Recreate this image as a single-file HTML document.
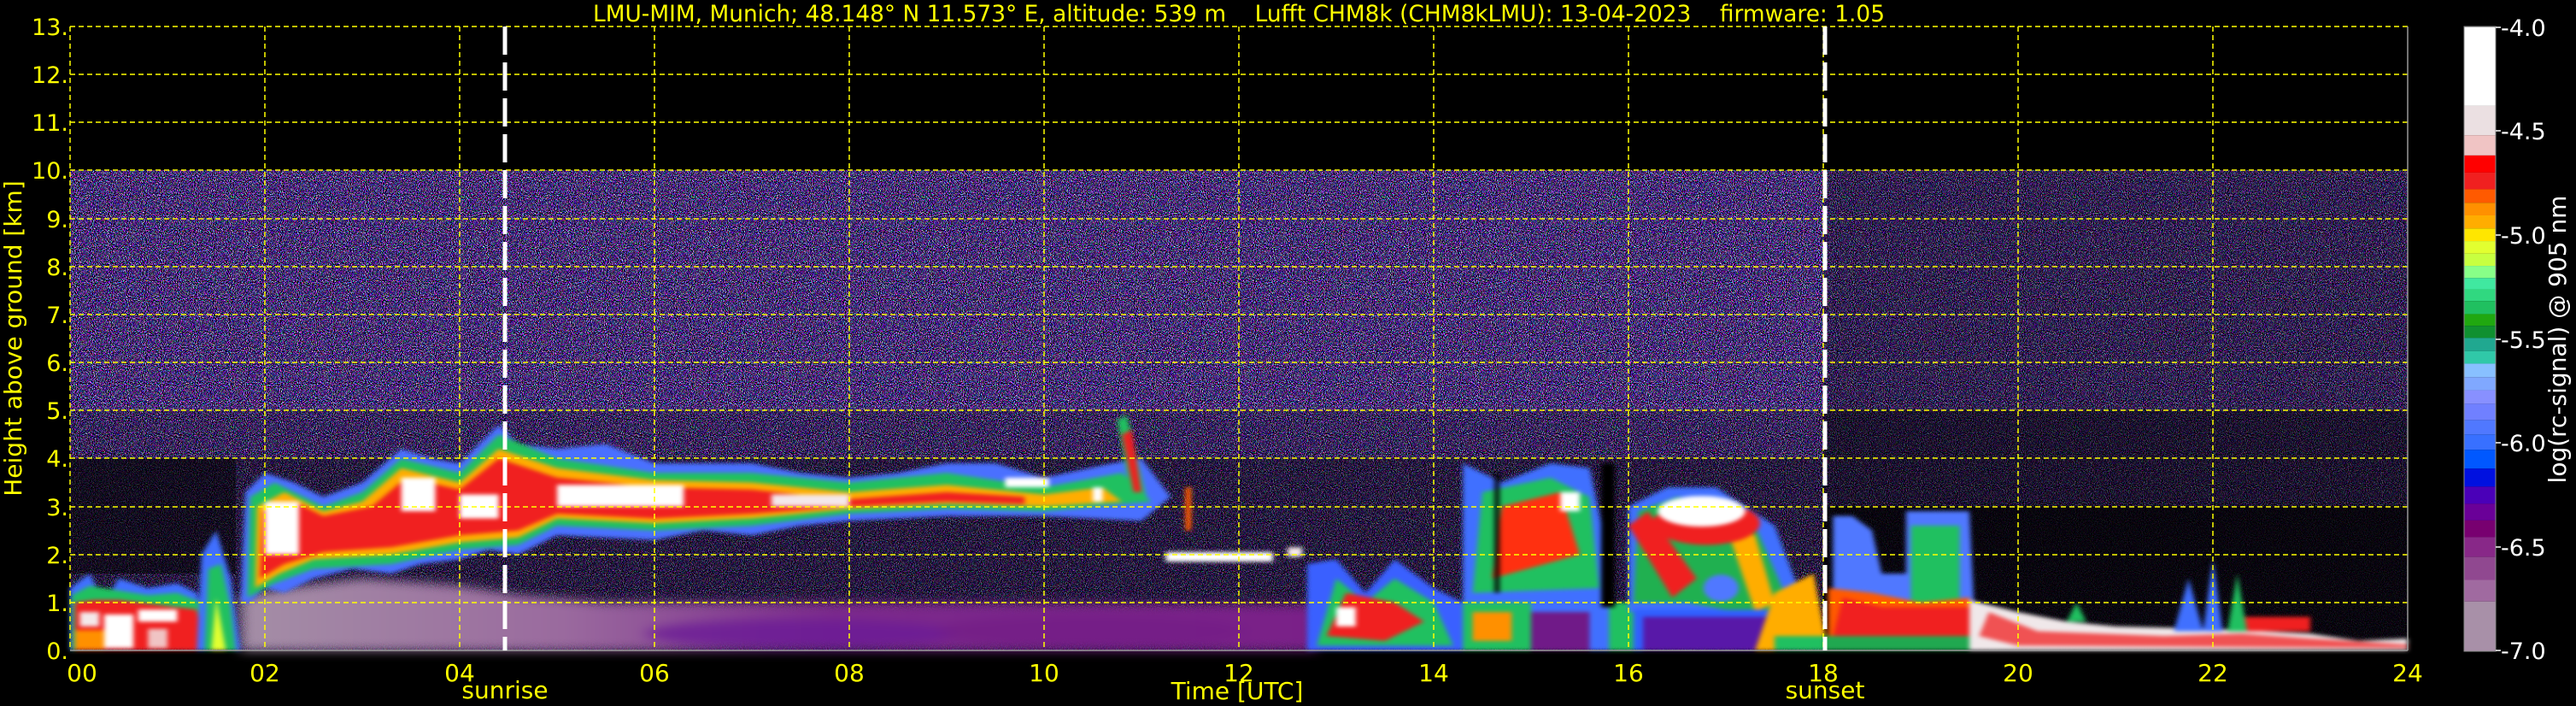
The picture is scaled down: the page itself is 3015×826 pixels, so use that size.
<!DOCTYPE html>
<html><head><meta charset="utf-8"><style>
html,body{margin:0;padding:0;background:#000;}
svg{display:block}
text{font-family:"DejaVu Sans","Liberation Sans",sans-serif;}
</style></head><body>
<svg width="3015" height="826" viewBox="0 0 3015 826" xmlns="http://www.w3.org/2000/svg">
<defs>
<filter id="nz" x="0" y="0" width="1" height="1" filterUnits="objectBoundingBox" color-interpolation-filters="sRGB">
<feTurbulence type="fractalNoise" baseFrequency="0.95" numOctaves="1" seed="7" result="t"/>
<feColorMatrix in="t" type="matrix" values="5 0 0 0 -2.0  0 5 0 0 -2.2  0 0 5 0 -1.4  0 0 0 6 -2.4"/>
</filter>
<filter id="pb" filterUnits="userSpaceOnUse" x="0" y="0" width="3015" height="826" color-interpolation-filters="sRGB">
<feGaussianBlur stdDeviation="3 2.5"/>
</filter>
<filter id="pb2" filterUnits="userSpaceOnUse" x="0" y="0" width="3015" height="826" color-interpolation-filters="sRGB">
<feGaussianBlur stdDeviation="8 6"/>
</filter>
<linearGradient id="bg1" x1="0" x2="1" y1="0" y2="0">
<stop offset="0" stop-color="#a48ea6"/><stop offset="0.3" stop-color="#9a6a9e"/><stop offset="0.55" stop-color="#7c2a8c"/><stop offset="1" stop-color="#7a2088"/>
</linearGradient>
</defs>

<rect x="82" y="199" width="2736" height="562" fill="#000"/>
<rect x="82" y="199" width="2736" height="562" filter="url(#nz)"/>

<g transform="translate(82,761) scale(114,-56.15)">
<rect x="0" y="4" width="18" height="1" fill="#000" opacity="0.2"/>
<rect x="0" y="0" width="18" height="4" fill="#000" opacity="0.45"/>
<rect x="0" y="1.6" width="1.7" height="2.4" fill="#000" opacity="0.5"/>
<rect x="18" y="5" width="6" height="5" fill="#000" opacity="0.3"/>
<rect x="18" y="3" width="6" height="2" fill="#000" opacity="0.6"/>
<rect x="18" y="0" width="6" height="3" fill="#000" opacity="0.88"/>
</g>

<g filter="url(#pb2)">
<g transform="translate(82,761) scale(114,-56.15)">
<polygon points="1.75,0 1.75,1.1 2.2,1.3 3,1.5 4,1.35 4.6,1.15 5.5,1.0 8,1.0 12.8,0.95 12.8,0 " fill="url(#bg1)"/>
<ellipse cx="7.5" cy="0.35" rx="1.6" ry="0.3" fill="#6a1a96" opacity="0.8"/>
<ellipse cx="10.5" cy="0.4" rx="1.6" ry="0.35" fill="#721a86" opacity="0.6"/>
</g>
</g>

<g filter="url(#pb)">
<g transform="translate(82,761) scale(114,-56.15)">
<polygon points="0,0 0,1.3 0.2,1.6 0.35,1.0 0.5,1.5 0.8,1.3 1.1,1.4 1.3,1.2 1.45,0" fill="#4070ff"/>
<polygon points="0.02,0 0.02,1.15 0.2,1.35 0.5,1.25 0.8,1.15 1.1,1.2 1.35,1.0 1.4,0" fill="#20c060"/>
<polygon points="0.05,0 0.05,1.0 0.25,1.05 0.5,1.05 0.9,0.95 1.3,0.85 1.38,0" fill="#f02020"/>
<rect x="0.05" y="0.02" width="0.3" height="0.4" fill="#ff9000"/>
<rect x="0.35" y="0.05" width="0.3" height="0.7" fill="#fff"/>
<rect x="0.1" y="0.5" width="0.2" height="0.3" fill="#f4e8ea"/>
<rect x="0.7" y="0.6" width="0.4" height="0.25" fill="#fff"/>
<rect x="0.8" y="0.05" width="0.2" height="0.4" fill="#f0c4c4"/>
<polygon points="1.3,0 1.35,2.0 1.5,2.5 1.65,1.5 1.75,0" fill="#4070ff"/>
<polygon points="1.38,0 1.42,1.7 1.55,1.8 1.65,0.9 1.7,0" fill="#20c060"/>
<polygon points="1.45,0 1.5,1.1 1.6,0" fill="#e2ff30"/>

<polygon points="1.75,1.0 1.8,3.3 2.0,3.7 2.3,3.5 2.6,3.2 3.0,3.5 3.4,4.2 3.7,4.0 4.0,3.9 4.4,4.7 4.6,4.3 5,4.2 5.5,4.3 6,3.9 6.5,3.9 7,3.9 7.5,3.7 8,3.6 8.5,3.7 9,3.9 9.5,3.9 10,3.6 10.7,3.9 11,4.0 11.3,3.2 11,2.7 10,2.8 9,2.8 8,2.7 7.5,2.6 7,2.4 6.5,2.5 6,2.3 5,2.4 4.6,2.0 4.3,2.1 4,1.9 3.6,1.8 3.3,1.6 2.9,1.7 2.5,1.5 2.2,1.2 2.0,1.3 1.85,1.0" fill="#4a70ff"/>
<polygon points="1.82,1.1 1.85,3.2 2.1,3.5 2.6,3.0 3.0,3.3 3.4,4.0 4.0,3.7 4.4,4.5 5,4.0 6,3.7 7,3.7 8,3.5 9,3.7 10,3.4 10.8,3.7 11.1,3.1 10,2.9 9,2.95 8,2.85 7,2.6 6,2.5 5,2.6 4.6,2.2 4,2.1 3.3,1.8 2.5,1.7 2.1,1.4" fill="#20c060"/>
<polygon points="1.9,1.3 1.92,3.0 2.2,3.3 2.6,2.9 3.0,3.1 3.4,3.8 4.0,3.5 4.4,4.2 5,3.8 6,3.55 7,3.5 8,3.3 9,3.45 10,3.25 10.6,3.4 10.8,3.1 10,3.0 9,3.05 8,2.95 7,2.75 6,2.65 5,2.75 4.6,2.35 4,2.25 3.3,2.0 2.5,1.9 2.15,1.6" fill="#ffad00"/>
<polygon points="1.95,1.5 1.98,2.9 2.3,3.1 2.6,2.8 3.1,3.0 3.45,3.6 4.0,3.35 4.4,4.0 5,3.6 6,3.4 7,3.35 8,3.15 9,3.3 9.8,3.2 9.8,3.05 9,3.1 8,3.0 7,2.85 6,2.75 5,2.85 4.6,2.5 4,2.4 3.3,2.15 2.6,2.05 2.2,1.8" fill="#f02020"/>
<rect x="2.0" y="2.0" width="0.35" height="1.1" fill="#fff"/>
<rect x="3.4" y="2.9" width="0.35" height="0.7" fill="#fff"/>
<rect x="4.0" y="2.75" width="0.4" height="0.5" fill="#fff"/>
<rect x="5.0" y="3.0" width="1.3" height="0.45" fill="#fff"/>
<rect x="7.2" y="3.0" width="0.8" height="0.25" fill="#f4e8ea"/>
<rect x="9.6" y="3.4" width="0.45" height="0.2" fill="#fff"/>
<rect x="10.5" y="3.1" width="0.1" height="0.3" fill="#fff"/>
<polygon points="10.75,4.8 10.85,4.9 11.05,3.2 10.9,3.1" fill="#20c060"/>
<polygon points="10.8,4.5 10.9,4.6 11.0,3.3 10.92,3.3" fill="#f02020"/>
<rect x="11.45" y="2.5" width="0.06" height="0.9" fill="#ff5a00"/>

<rect x="11.25" y="1.85" width="1.1" height="0.2" fill="#fff"/>
<rect x="12.5" y="1.95" width="0.15" height="0.2" fill="#f4e8ea"/>

<polygon points="12.7,0 12.7,1.8 13,1.9 13.3,1.2 13.6,1.9 14.0,1.3 14.3,1.0 14.4,0" fill="#3a60ff"/>
<polygon points="12.8,0.1 13,1.5 13.3,1.0 13.6,1.5 14,1.0 14.2,0.1" fill="#20c060"/>
<polygon points="12.9,0.3 13.1,1.2 13.6,1.0 13.9,0.6 13.5,0.2" fill="#f02020"/>
<rect x="13.0" y="0.5" width="0.2" height="0.4" fill="#fff"/>

<polygon points="14.3,0 14.3,3.9 14.7,3.5 15.2,3.9 15.6,3.8 15.8,1.9 15.9,0" fill="#4070ff"/>
<polygon points="14.4,1.2 14.5,3.3 15.2,3.6 15.6,3.2 15.7,1.3" fill="#20c060"/>
<polygon points="14.6,1.5 14.7,3.0 15.3,3.3 15.5,2.0" fill="#ff3010"/>
<rect x="15.3" y="2.9" width="0.2" height="0.4" fill="#fff"/>
<rect x="14.3" y="0" width="0.7" height="1.0" fill="#20c060"/>
<rect x="14.4" y="0.2" width="0.4" height="0.6" fill="#ff9000"/>
<rect x="15.0" y="0" width="0.6" height="0.8" fill="#701a88"/>
<rect x="15.8" y="0" width="0.3" height="1.0" fill="#20c060"/>
<rect x="15.72" y="0.9" width="0.14" height="3.0" fill="#000"/>
<rect x="14.62" y="1.2" width="0.06" height="2.5" fill="#000" opacity="0.8"/>

<polygon points="16,0.8 16,3.0 16.4,3.4 16.9,3.4 17.2,3.0 17.5,2.6 17.8,1.0 17.6,0.3 17.2,0.8 16.5,0.8" fill="#4070ff"/>
<polygon points="16.05,1 16.1,2.9 16.5,3.2 17,3.1 17.3,2.6 17.6,1.2 17.4,0.7 16.6,1.0" fill="#20b050"/>
<polygon points="16.0,2.6 16.2,2.9 16.7,1.5 16.45,1.1" fill="#f02020"/>
<polygon points="17.0,2.6 17.3,2.4 17.5,1.0 17.3,0.8" fill="#ffad00"/>
<ellipse cx="16.8" cy="2.65" rx="0.55" ry="0.45" fill="#f02020"/>
<ellipse cx="16.75" cy="2.9" rx="0.45" ry="0.32" fill="#fff"/>
<ellipse cx="16.95" cy="1.3" rx="0.18" ry="0.28" fill="#5078ff"/>
<rect x="16.05" y="0" width="1.5" height="0.85" fill="#3060ff"/>
<rect x="16.15" y="0" width="1.35" height="0.7" fill="#5818a8"/>
<polygon points="17.3,0 17.5,1.2 17.9,1.6 18.05,0" fill="#ffad00"/>
<rect x="17.5" y="0" width="0.6" height="0.3" fill="#20c060"/>
<polygon points="18.1,0 18.1,2.8 18.3,2.8 18.5,2.5 18.6,1.6 18.85,1.6 18.85,2.9 19.5,2.9 19.55,0.8 19.6,0" fill="#5078ff"/>
<polygon points="18.9,0.8 18.9,2.6 19.4,2.6 19.4,0.8" fill="#20c060"/>
<polygon points="18.05,0.2 18.05,1.3 18.5,1.2 19,1.0 19.5,1.1 19.65,0.2" fill="#ff5a00"/>
<polygon points="18.1,0.3 18.2,1.1 18.6,0.9 19.6,0.9 19.6,0.3" fill="#f02020"/>
<rect x="18" y="0" width="2" height="0.3" fill="#20a850"/>
<polygon points="19.5,0 19.5,1.05 19.8,0.9 20,0.8 20.5,0.6 21,0.5 22,0.45 22.5,0.4 23,0.35 23.5,0.2 24,0.25 24,0" fill="#f0e8ea"/>
<polygon points="19.6,0.3 19.7,0.8 20.2,0.4 21.5,0.3 22.3,0.35 23,0.25 24,0.12 24,0.05 20,0.1" fill="#f02020" opacity="0.75"/>
<rect x="22.2" y="0.4" width="0.8" height="0.3" fill="#f02020"/>
<polygon points="21.6,0.4 21.75,1.5 21.9,0.4" fill="#4070ff"/>
<polygon points="21.9,0.4 22.0,1.9 22.1,0.4" fill="#4070ff"/>
<polygon points="22.15,0.4 22.25,1.6 22.35,0.4" fill="#20c060"/>
<polygon points="20.5,0.6 20.6,1.0 20.7,0.6" fill="#20c060"/>
</g>
</g>

<g stroke="#ffff00" stroke-width="1.5" stroke-dasharray="6,4" fill="none">
<line x1="82" y1="31" x2="2818" y2="31"/>
<line x1="82" y1="87" x2="2818" y2="87"/>
<line x1="82" y1="143" x2="2818" y2="143"/>
<line x1="82" y1="199" x2="2818" y2="199"/>
<line x1="82" y1="256" x2="2818" y2="256"/>
<line x1="82" y1="312" x2="2818" y2="312"/>
<line x1="82" y1="368" x2="2818" y2="368"/>
<line x1="82" y1="424" x2="2818" y2="424"/>
<line x1="82" y1="480" x2="2818" y2="480"/>
<line x1="82" y1="536" x2="2818" y2="536"/>
<line x1="82" y1="593" x2="2818" y2="593"/>
<line x1="82" y1="649" x2="2818" y2="649"/>
<line x1="82" y1="705" x2="2818" y2="705"/>
<line x1="82" y1="31" x2="82" y2="761"/>
<line x1="310" y1="31" x2="310" y2="761"/>
<line x1="538" y1="31" x2="538" y2="761"/>
<line x1="766" y1="31" x2="766" y2="761"/>
<line x1="994" y1="31" x2="994" y2="761"/>
<line x1="1222" y1="31" x2="1222" y2="761"/>
<line x1="1450" y1="31" x2="1450" y2="761"/>
<line x1="1678" y1="31" x2="1678" y2="761"/>
<line x1="1906" y1="31" x2="1906" y2="761"/>
<line x1="2134" y1="31" x2="2134" y2="761"/>
<line x1="2362" y1="31" x2="2362" y2="761"/>
<line x1="2590" y1="31" x2="2590" y2="761"/>
</g>
<line x1="2818" y1="31" x2="2818" y2="761" stroke="#999" stroke-width="1.5"/>
<line x1="82" y1="761" x2="2818" y2="761" stroke="#999" stroke-width="1.5"/>

<line x1="591" y1="31" x2="591" y2="761" stroke="#fff" stroke-width="5" stroke-dasharray="33,9"/>
<line x1="2136" y1="31" x2="2136" y2="761" stroke="#fff" stroke-width="5" stroke-dasharray="33,9"/>

<text x="694" y="25" font-size="27" fill="#ffff00" style="white-space:pre" xml:space="preserve" textLength="1512" lengthAdjust="spacingAndGlyphs">LMU-MIM, Munich; 48.148° N 11.573° E, altitude: 539 m    Lufft CHM8k (CHM8kLMU): 13-04-2023    firmware: 1.05</text>

<g font-size="27" fill="#ffff00" text-anchor="end">
<text x="80" y="41">13.</text>
<text x="80" y="97">12.</text>
<text x="80" y="153">11.</text>
<text x="80" y="209">10.</text>
<text x="80" y="266">9.</text>
<text x="80" y="322">8.</text>
<text x="80" y="378">7.</text>
<text x="80" y="434">6.</text>
<text x="80" y="490">5.</text>
<text x="80" y="546">4.</text>
<text x="80" y="603">3.</text>
<text x="80" y="659">2.</text>
<text x="80" y="715">1.</text>
<text x="80" y="771">0.</text>
</g>
<text transform="translate(25,396) rotate(-90)" font-size="28" fill="#ffff00" text-anchor="middle">Height above ground [km]</text>

<g font-size="28" fill="#ffff00" text-anchor="middle">
<text x="96" y="797">00</text>
<text x="310" y="797">02</text>
<text x="538" y="797">04</text>
<text x="766" y="797">06</text>
<text x="994" y="797">08</text>
<text x="1222" y="797">10</text>
<text x="1450" y="797">12</text>
<text x="1678" y="797">14</text>
<text x="1906" y="797">16</text>
<text x="2134" y="797">18</text>
<text x="2362" y="797">20</text>
<text x="2590" y="797">22</text>
<text x="2818" y="797">24</text>
<text x="591" y="817">sunrise</text>
<text x="1448" y="818">Time [UTC]</text>
<text x="2136" y="817">sunset</text>
</g>

<g transform="translate(2884,0) scale(1,0.5272)">
<rect x="0" y="60" width="37" height="175" fill="#ffffff"/>
<rect x="0" y="235" width="37" height="65" fill="#ebe0e2"/>
<rect x="0" y="300" width="37" height="45" fill="#f0c4c4"/>
<rect x="0" y="345" width="37" height="38" fill="#ff0000"/>
<rect x="0" y="383" width="37" height="37" fill="#f02020"/>
<rect x="0" y="420" width="37" height="30" fill="#ff5a00"/>
<rect x="0" y="450" width="37" height="28" fill="#ff9000"/>
<rect x="0" y="478" width="37" height="29" fill="#ffad00"/>
<rect x="0" y="507" width="37" height="28" fill="#ffe600"/>
<rect x="0" y="535" width="37" height="28" fill="#e2ff30"/>
<rect x="0" y="563" width="37" height="27" fill="#c8ff40"/>
<rect x="0" y="590" width="37" height="27" fill="#88ff88"/>
<rect x="0" y="617" width="37" height="25" fill="#40e8a0"/>
<rect x="0" y="642" width="37" height="26" fill="#30d880"/>
<rect x="0" y="668" width="37" height="29" fill="#20c060"/>
<rect x="0" y="697" width="37" height="26" fill="#20a810"/>
<rect x="0" y="723" width="37" height="27" fill="#109030"/>
<rect x="0" y="750" width="37" height="29" fill="#20a890"/>
<rect x="0" y="779" width="37" height="28" fill="#30c8a8"/>
<rect x="0" y="807" width="37" height="30" fill="#88c0ff"/>
<rect x="0" y="837" width="37" height="29" fill="#80a8ff"/>
<rect x="0" y="866" width="37" height="30" fill="#8890ff"/>
<rect x="0" y="896" width="37" height="36" fill="#7080ff"/>
<rect x="0" y="932" width="37" height="32" fill="#5078ff"/>
<rect x="0" y="964" width="37" height="34" fill="#3870ff"/>
<rect x="0" y="998" width="37" height="42" fill="#0058ff"/>
<rect x="0" y="1040" width="37" height="40" fill="#0010e0"/>
<rect x="0" y="1080" width="37" height="38" fill="#4a00b8"/>
<rect x="0" y="1118" width="37" height="37" fill="#6a0098"/>
<rect x="0" y="1155" width="37" height="37" fill="#780070"/>
<rect x="0" y="1192" width="37" height="44" fill="#882888"/>
<rect x="0" y="1236" width="37" height="51" fill="#904890"/>
<rect x="0" y="1287" width="37" height="48" fill="#a06aa0"/>
<rect x="0" y="1335" width="37" height="110" fill="#a890a8"/>
</g>
<rect x="2884" y="31" width="37" height="731" fill="none" stroke="#888" stroke-width="1"/>
<g stroke="#fff" stroke-width="1.5">
<line x1="2921" y1="32" x2="2927" y2="32"/><line x1="2921" y1="153" x2="2927" y2="153"/>
<line x1="2921" y1="275" x2="2927" y2="275"/><line x1="2921" y1="397" x2="2927" y2="397"/>
<line x1="2921" y1="518" x2="2927" y2="518"/><line x1="2921" y1="640" x2="2927" y2="640"/>
<line x1="2921" y1="761" x2="2927" y2="761"/>
</g>
<g font-size="27" fill="#ffffff">
<text x="2927" y="42">-4.0</text>
<text x="2927" y="163">-4.5</text>
<text x="2927" y="285">-5.0</text>
<text x="2927" y="407">-5.5</text>
<text x="2927" y="528">-6.0</text>
<text x="2927" y="650">-6.5</text>
<text x="2927" y="771">-7.0</text>
</g>
<text transform="translate(3003,397) rotate(-90)" font-size="28" fill="#ffffff" text-anchor="middle">log(rc-signal) @ 905 nm</text>
</svg>
</body></html>
